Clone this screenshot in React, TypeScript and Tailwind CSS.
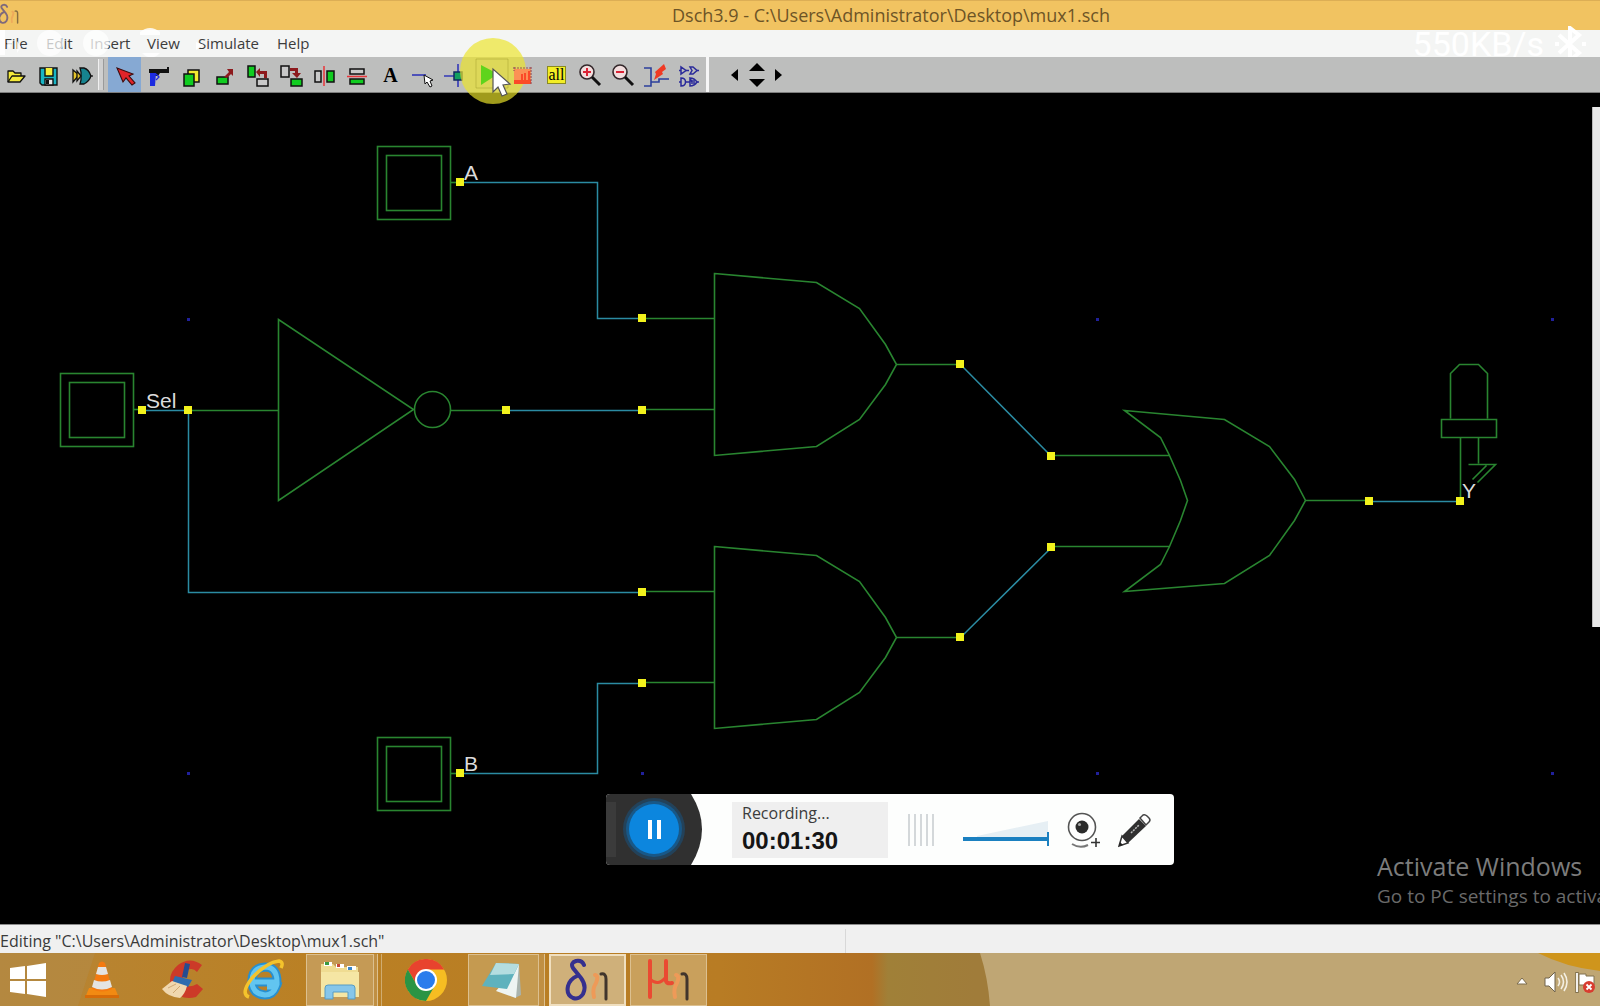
import React from "react";

type Tool = { name: string; art: React.ReactNode };

const K = "#111111";
const G = "#10cc20";

const fileTools: Tool[] = [
  {
    name: "Open",
    art: (
      <g stroke={K} strokeWidth="1.3" strokeLinejoin="round">
        <path d="M8 23V12h5l2 2h6v3" fill="#f4ea3a" />
        <path d="M8 23l4-6h13l-5 6z" fill="#f4ea3a" />
      </g>
    ),
  },
  {
    name: "Save",
    art: (
      <g stroke={K} strokeWidth="1.4">
        <path d="M7 9h17v17H9l-2-2z" fill="#19b5c4" />
        <path d="M12 9h8v8h-8z" fill="#f4ee3c" stroke="none" />
        <path d="M12 9v8h8V9" fill="none" />
        <path d="M12 20h8v6h-8z" fill="#e8e8e8" />
        <path d="M13 21h3v4h-3z" fill={K} stroke="none" />
      </g>
    ),
  },
  {
    name: "Exit",
    art: (
      <g stroke={K} strokeWidth="1.3">
        <path d="M7 11l6 5-6 7z" fill="#e5c52c" />
        <path d="M14 9h4c4 1 6 5 7 8-1 3-3 6-7 8h-4l1-4V13z" fill="#16838f" />
        <path d="M11 12l4 5-4 5z" fill="#e5c52c" />
        <path d="M24 17h3" />
      </g>
    ),
  },
];

const editTools: Tool[] = [
  {
    name: "Select",
    art: <path d="M8 9l16 6-4 2 6 7-3 2-6-7-3 4z" fill="#e0242a" stroke="#3a0c0c" strokeWidth="1.1" />,
  },
  {
    name: "Delete",
    art: (
      <g>
        <path d="M7 10h18V8h2v6h-9l-2 3h-3V14H7z" fill={K} />
        <path d="M8 14h6l-1 13H8z" fill="#1c2be0" />
        <path d="M14 15l3 3-3 3" stroke="#1c2be0" strokeWidth="1.3" fill="none" />
      </g>
    ),
  },
  {
    name: "Copy",
    art: (
      <g stroke={K} strokeWidth="1.5">
        <path d="M13 11h11v12H13z" fill="#f2ec30" />
        <path d="M9 15h10v12H9z" fill={G} />
      </g>
    ),
  },
  {
    name: "Move",
    art: (
      <g>
        <path d="M9 18h11v7H9z" fill={G} stroke={K} strokeWidth="1.5" />
        <path d="M16 18l5-5-2-3h6v7l-2-2-4 4z" fill="#8d1a1d" />
      </g>
    ),
  },
  {
    name: "Rotate left",
    art: (
      <g>
        <path d="M7 7h7v11H7z" fill={G} stroke={K} strokeWidth="1.5" />
        <path d="M16 20h11v7H16z" fill="#c9c9c9" stroke={K} strokeWidth="1.5" />
        <path d="M15 13l4-4v3h7v7h-3v-4h-4v3z" fill="#8d1a1d" />
      </g>
    ),
  },
  {
    name: "Rotate right",
    art: (
      <g>
        <path d="M6 7h8v11H6z" fill="#c9c9c9" stroke={K} strokeWidth="1.5" />
        <path d="M16 20h11v7H16z" fill={G} stroke={K} strokeWidth="1.5" />
        <path d="M15 9h8v5h3l-4 5-5-5h3v-2h-5z" fill="#8d1a1d" />
      </g>
    ),
  },
  {
    name: "Flip horizontal",
    art: (
      <g>
        <path d="M7 12h6v11H7z" fill="#c9c9c9" stroke={K} strokeWidth="1.5" />
        <path d="M19 12h7v11h-7z" fill={G} stroke={K} strokeWidth="1.5" />
        <path d="M16 7v20" stroke="#e8343a" strokeWidth="1.5" />
      </g>
    ),
  },
  {
    name: "Flip vertical",
    art: (
      <g>
        <path d="M9 10h14v5H9z" fill="#c9c9c9" stroke={K} strokeWidth="1.5" />
        <path d="M9 20h14v5H9z" fill={G} stroke={K} strokeWidth="1.5" />
        <path d="M6 17.5h20" stroke="#e8343a" strokeWidth="1.5" />
      </g>
    ),
  },
  { name: "Text", art: null },
  {
    name: "Wire",
    art: (
      <g>
        <path d="M4 16h14" stroke="#3338b8" strokeWidth="1.6" />
        <path d="M16 16l9 5-3 1 2 5-2 1-3-5-2 2z" fill="#fff" stroke={K} />
      </g>
    ),
  },
  {
    name: "Connection",
    art: (
      <g>
        <path d="M3 17h14M17 5v23" stroke="#3338b8" strokeWidth="1.6" />
        <path d="M13 13h8v8h-8z" fill="#12a060" stroke="#102a60" strokeWidth="1.5" />
      </g>
    ),
  },
  { name: "Simulate", art: null },
  {
    name: "Timing",
    art: (
      <g>
        <path d="M7 10h17v15H7z" fill="#fb9155" />
        <path d="M7 21h17v4H7z" fill="#fb4a28" />
        <path d="M15 24V15M18 24V14M22 24V12" stroke="#fb4a28" strokeWidth="2" />
        <path d="M7 9h18M7 8v4M24 8v17" stroke="#9a5058" strokeWidth="1.2" strokeDasharray="2 1" />
      </g>
    ),
  },
  { name: "View all", art: null },
  {
    name: "Zoom in",
    art: (
      <g>
        <circle cx="13" cy="13" r="7" fill="#f2dede" stroke="#33272a" strokeWidth="1.6" />
        <path d="M18 18l8 8" stroke={K} strokeWidth="3" />
        <path d="M9 13h8M13 9v8" stroke="#dc2436" strokeWidth="2" />
      </g>
    ),
  },
  {
    name: "Zoom out",
    art: (
      <g>
        <circle cx="13" cy="13" r="7" fill="#f2dede" stroke="#33272a" strokeWidth="1.6" />
        <path d="M18 18l8 8" stroke={K} strokeWidth="3" />
        <path d="M9 13h8" stroke="#dc2436" strokeWidth="2" />
      </g>
    ),
  },
  {
    name: "Critical path",
    art: (
      <g>
        <path d="M4 9h7v18H4M11 23h8v-3h10" fill="none" stroke="#2b3f9c" strokeWidth="1.6" />
        <path d="M24 5l2 5-4 3 1 2-9 6 2-6-1-2z" fill="#f03a24" />
      </g>
    ),
  },
  {
    name: "Symbol library",
    art: (
      <g fill="none" stroke="#2a2a9a" strokeWidth="1.5">
        <path d="M8 8v7l5-3.500zM17 8h3l4 3.500-4 3.500h-3l2-3.500zM8 19v8c6 0 6-8 0-8zM17 19v8c3 0 5-1 7-4-2-3-4-4-7-4l2 4z" />
        <path d="M6 11.500h2M13 11.500h3M24 11.500h2M6 23h2M12 23h5M19 21v4M21 21v4M24 23h2" />
      </g>
    ),
  },
];

function ToolGroup({ tools, className }: { tools: Tool[]; className: string }) {
  return (
    <div className={`flex ${className}`}>
      {tools.map((t) => (
        <button
          key={t.name}
          aria-label={t.name}
          className={`relative flex min-w-0 flex-1 items-center justify-center ${t.name === "Select" ? "bg-[#86a9d3]" : ""}`}
        >
          {t.name === "Text" ? (
            <span className="font-['Liberation_Serif',serif] text-xl font-bold text-black">A</span>
          ) : t.name === "View all" ? (
            <span className="flex h-[18px] w-[19px] items-center justify-center border border-[#8a8a20] bg-[#f3ee26] font-['Liberation_Serif',serif] text-base leading-none text-black">
              all
            </span>
          ) : t.name === "Simulate" ? (
            <Pointer />
          ) : (
            <svg viewBox="0 0 32 32" className="h-8 w-8 shrink-0" aria-hidden="true">
              {t.art}
            </svg>
          )}
        </button>
      ))}
    </div>
  );
}

function Pointer() {
  return (
    <svg viewBox="0 0 68 68" className="pointer-events-none absolute -top-5 -left-3.5 h-[68px] w-[68px] max-w-none" aria-hidden="true">
      <circle cx="34" cy="34" r="33" fill="#ece52a" fillOpacity="0.68" />
      <path d="M17 22h32v29H17z" fill="none" stroke="#8c8c20" strokeOpacity="0.35" />
      <path d="M22 28l17 9-17 11z" fill="#5fd41c" />
      <path d="M34 32v23l5-5 4 9 5-2-4-9 7-1z" fill="#fff" stroke="#555" strokeWidth="1.2" />
    </svg>
  );
}

const menus = [
  { label: "File", w: "w-[42px]" },
  { label: "Edit", w: "w-[44px]" },
  { label: "Insert", w: "w-[57px]" },
  { label: "View", w: "w-[51px]" },
  { label: "Simulate", w: "w-[79px]" },
  { label: "Help", w: "w-[50px]" },
];

function Input({ x, y }: { x: number; y: number }) {
  return (
    <g>
      <rect x={x} y={y} width="73" height="73" />
      <rect x={x + 9} y={y + 9} width="55" height="55" />
      <path d={`M${x + 73} ${y + 36}h8`} />
    </g>
  );
}

function AndGate({ y }: { y: number }) {
  return (
    <g transform={`translate(715 ${y})`}>
      <path d="M0 0L102 9L145 35L171 71L182 91L171 111L145 146L102 173L0 182Z" />
      <path d="M-73 45H0M-73 136H0M182 91H245" />
    </g>
  );
}

const nodes = [
  [142, 410], [188, 410], [506, 410], [642, 410], [642, 318], [460, 182], [960, 364], [1051, 456],
  [1051, 547], [960, 637], [642, 592], [642, 683], [460, 773], [1369, 501], [1460, 501],
];
const gridDots = [
  [188, 319], [1097, 319], [1552, 319], [188, 773], [642, 773], [1097, 773], [1552, 773],
];

function Schematic() {
  return (
    <svg viewBox="0 93 1600 831" className="block h-[831px] w-[1600px] max-w-none shrink-0" role="img" aria-label="Multiplexer schematic">
      <g fill="#20209a">
        {gridDots.map(([x, y]) => (
          <rect key={`${x}-${y}`} x={x - 1} y={y - 1} width="3" height="3" />
        ))}
      </g>
      <g transform="translate(-0.5 -0.5)" fill="none" strokeWidth="1.6" stroke="#298530">
        <Input x={61} y={374} />
        <Input x={378} y={147} />
        <Input x={378} y={738} />
        <path d="M188 411H279M279 320V501L414 410Z" />
        <circle cx="433" cy="410" r="18" />
        <path d="M451 411H506" />
        <AndGate y={274} />
        <AndGate y={547} />
        <path d="M1125 411L1225 420L1270 447L1295 480L1306 501L1295 521L1270 556L1225 584L1125 592L1161 565L1170 547L1181 521L1188 501L1181 481L1170 456L1161 438Z" />
        <path d="M1051 456H1170M1051 547H1170M1306 501H1369" />
        <path d="M1451 419V374L1460 365H1479L1488 374V419M1442 420H1497V438H1442ZM1461 438V501M1479 438V464M1469 465H1496L1478 483M1487 466L1473 480" />
      </g>
      <g transform="translate(0.5 0.5)" fill="none" strokeWidth="1.5" stroke="#2b8ba2">
        <path d="M142 410H188V592H642M506 410H642M460 182H597V318H642M460 773H597V683H642M960 364L1051 456M960 637L1051 547M1369 501H1460" />
      </g>
      <g fill="#f2f21c">
        {nodes.map(([x, y]) => (
          <rect key={`${x}-${y}`} x={x - 4} y={y - 4} width="8" height="8" />
        ))}
      </g>
      <g fill="#dcdcdc" fontFamily="'Liberation Sans', Arial, sans-serif" fontSize="21">
        <text x="464" y="180">A</text>
        <text x="146" y="408">Sel</text>
        <text x="464" y="771">B</text>
        <text x="1462" y="498">Y</text>
      </g>
    </svg>
  );
}

function Recorder() {
  return (
    <div className="absolute top-[701px] left-[606px] flex h-[71px] w-[568px] items-center overflow-hidden rounded-sm bg-[#fdfefd]">
      <button aria-label="Pause recording" className="h-full w-[96px] shrink-0">
        <svg viewBox="0 0 96 71" className="h-full w-full" aria-hidden="true">
          <path d="M0 0H85Q107 35 85 71H0Z" fill="#303030" />
          <path d="M0 8h10v55H0z" fill="#3b3b3b" />
          <circle cx="48" cy="35" r="31" fill="#23425a" />
          <circle cx="48" cy="35" r="28" fill="#185888" />
          <circle cx="48" cy="35" r="25" fill="#0c86de" />
          <path d="M42 26h4v19h-4zM51 26h4v19h-4z" fill="#fff" />
        </svg>
      </button>
      <div className="ml-[30px] flex h-14 w-[156px] shrink-0 flex-col justify-center bg-[#efefef] pb-0.5 pl-2.5">
        <span className="font-['Open_Sans',sans-serif] text-base leading-6 text-[#3c3c3c]">Recording...</span>
        <span className="font-['Liberation_Sans',sans-serif] text-2xl leading-8 font-bold text-[#151515]">00:01:30</span>
      </div>
      <div className="ml-5 flex w-[26px] shrink-0 justify-between" aria-hidden="true">
        {[0, 1, 2, 3, 4].map((i) => (
          <span key={i} className="h-8 w-0.5 bg-[#d4d8da]" />
        ))}
      </div>
      <div className="relative ml-[29px] flex h-full w-[86px] shrink-0 items-center pt-[18px]">
        <svg viewBox="0 0 86 20" className="absolute top-6 left-0 h-5 w-[86px]" aria-hidden="true">
          <path d="M14 18L85 3V20H14z" fill="#e6eff4" />
        </svg>
        <input
          type="range"
          aria-label="Volume"
          defaultValue={100}
          className="relative h-1 w-full appearance-none bg-[#1b80c0] [&::-webkit-slider-thumb]:h-3.5 [&::-webkit-slider-thumb]:w-0.5 [&::-webkit-slider-thumb]:appearance-none [&::-webkit-slider-thumb]:bg-[#1b80c0]"
        />
      </div>
      <button aria-label="Add webcam" className="ml-4 shrink-0">
        <svg viewBox="0 0 36 40" className="h-10 w-9" aria-hidden="true">
          <circle cx="17" cy="17" r="13.500" fill="#fff" stroke="#555" strokeWidth="1.6" />
          <circle cx="17" cy="17" r="6.500" fill="#2c2c2c" />
          <circle cx="14.500" cy="14.500" r="1.500" fill="#aaa" />
          <path d="M7 34q8 5 16 1" stroke="#777" strokeWidth="2" fill="none" />
          <path d="M31 28v9M26 32.500h9" stroke="#333" strokeWidth="1.600" />
        </svg>
      </button>
      <button aria-label="Draw" className="ml-4 shrink-0">
        <svg viewBox="0 0 36 36" className="h-9 w-9" aria-hidden="true">
          <path d="M2 34l3-10 6 7z" fill="#fff" stroke="#333" strokeWidth="1.500" />
          <path d="M2 34l1-4 3 3z" fill="#222" />
          <path d="M5 24L22 7l7 7L11 31z" fill="#303030" />
          <path d="M14 21l8-8" stroke="#bbb" strokeWidth="1.500" strokeDasharray="2 1" />
          <path d="M23 6l3-3q2-1 4 1l2 2q2 2 0 4l-3 3z" fill="#fff" stroke="#444" strokeWidth="1.500" />
        </svg>
      </button>
    </div>
  );
}

function DschMark({ micro, className }: { micro?: boolean; className: string }) {
  return (
    <svg viewBox="0 0 46 46" className={className} fill="none" strokeLinecap="round" aria-hidden="true">
      {micro ? (
        <g stroke="#ea4a32">
          <path d="M4 4V40" strokeWidth="4" />
          <path d="M4 22q8 8 16-2" strokeWidth="3" />
          <path d="M20 4V24q1 3 6 2" strokeWidth="4" />
        </g>
      ) : (
        <g stroke="#35308e">
          <path d="M19 8q-2-5-8-4-6 2-3 7l8 10q6 8 2 16-4 6-10 4-7-3-5-12 2-7 9-10" strokeWidth="4" />
        </g>
      )}
      <path d="M30 18q4 1 1 8-4 6-2 14" stroke="#ee9a58" strokeWidth="4" />
      <path d="M36 17q5-1 5 5v20" stroke="#41352c" strokeWidth="3" />
    </svg>
  );
}

function TaskButton({ label, className, children }: { label: string; className: string; children: React.ReactNode }) {
  return (
    <button aria-label={label} className={`flex h-[52px] shrink-0 items-center justify-center ${className}`}>
      {children}
    </button>
  );
}

function Taskbar() {
  return (
    <footer className="relative flex h-[53px] shrink-0 items-center overflow-hidden bg-[#b47c25]">
      <svg viewBox="0 0 1600 53" preserveAspectRatio="none" className="absolute inset-0 h-full w-full" aria-hidden="true">
        <defs>
          <linearGradient id="wood">
            <stop offset="0" stopColor="#b78535" />
            <stop offset="0.2" stopColor="#ba8024" />
            <stop offset="0.45" stopColor="#b87c24" />
            <stop offset="0.545" stopColor="#b17024" />
            <stop offset="0.555" stopColor="#a08038" />
            <stop offset="0.61" stopColor="#a07c3a" />
          </linearGradient>
        </defs>
        <path d="M0 0H1600V53H0z" fill="url(#wood)" />
        <path d="M0 0H95L78 53H0z" fill="#b28a48" fillOpacity="0.6" />
        <path d="M980 0H1600V53H990Q988 25 980 0z" fill="#bfa674" />
        <path d="M1538 0H1600V18Q1565 14 1538 0z" fill="#cf951c" />
      </svg>
      <nav className="relative flex items-center" aria-label="Running applications">
        <TaskButton label="Start" className="w-[56px]">
          <svg viewBox="0 0 36 34" className="h-[34px] w-9" fill="#fff" aria-hidden="true">
            <path d="M0 5l15-2v13H0zM17 3l19-3v16H17zM0 18h15v13L0 29zM17 18h19v16l-19-3z" />
          </svg>
        </TaskButton>
        <TaskButton label="VLC media player" className="ml-5 w-[52px]">
          <svg viewBox="0 0 36 38" className="h-[38px] w-9" aria-hidden="true">
            <path d="M5 27h26l4 10H1z" fill="#f28a12" />
            <path d="M1 34h34v3H1z" fill="#d86c08" />
            <path d="M15 2q3-3 6 0l7 26q-10 5-20 0z" fill="#f47a10" />
            <path d="M14 6h8l2 7q-6 2-12 0zM10 19q8 3 16 0l2 7q-10 5-20 0z" fill="#e4e4e2" />
          </svg>
        </TaskButton>
        <TaskButton label="CCleaner" className="ml-7 w-[52px]">
          <svg viewBox="0 0 44 42" className="h-[42px] w-11" aria-hidden="true">
            <path d="M42 6q-12-9-24 0-12 10-6 24 9 12 24 8l7-8-6-5q-9 5-13-1-3-8 3-13 6-3 10 2z" fill="#cc3a28" />
            <path d="M25 4l5 1-3 14-5-1z" fill="#254c90" />
            <path d="M15 17l17 4-4 7-16-4z" fill="#2f6cae" />
            <path d="M12 22l15 5q-2 8-7 12Q8 38 2 30z" fill="#f0d7ae" />
            <path d="M8 29l8-4M13 34l7-7" stroke="#cfa873" />
          </svg>
        </TaskButton>
        <TaskButton label="Internet Explorer" className="ml-7 w-[56px]">
          <svg viewBox="0 0 44 44" className="h-11 w-11" fill="none" aria-hidden="true">
            <path d="M11 24H35Q35 9 23 9 10 10 10 23T23 37q8 0 11-8H25" stroke="#2890d0" strokeWidth="9" />
            <path d="M11 24H35Q35 9 23 9 10 10 10 23T23 37q8 0 11-8H25" stroke="#62c5f0" strokeWidth="5" />
            <path d="M7 39Q-2 36 10 20 25 4 37 3q5 1 2 7" stroke="#f4c32c" strokeWidth="3.500" />
          </svg>
        </TaskButton>
        <TaskButton label="File Explorer" className="ml-3.5 w-[68px] border border-[#dcc090] bg-[#c59a55]">
          <svg viewBox="0 0 42 40" className="h-10 w-[42px]" aria-hidden="true">
            <path d="M2 4h12l3 3h22v30H2z" fill="#efdc92" />
            <path d="M2 12h38v25H2z" fill="#f5e6a4" />
            <path d="M5 2h8v4H5zM17 4h8v4h-8zM28 6h9v4h-9z" fill="#fff" />
            <path d="M6 2h4v3H6z" fill="#3a9a40" />
            <path d="M18 4h3v3h-3z" fill="#c84a38" />
            <path d="M29 7h4v3h-4z" fill="#3a86c8" />
            <path d="M6 39V28q0-3 3-3h24q3 0 3 3v11h-7v-7H14v7z" fill="#86c6ea" stroke="#569cc4" />
          </svg>
        </TaskButton>
        <span className="h-[52px] w-1 border-r border-[#dcc090] bg-[#c08f43]" />
        <span className="h-[52px] w-1 border-r border-[#d0ac70]" />
        <TaskButton label="Google Chrome" className="ml-3.5 w-[60px]">
          <svg viewBox="0 0 42 42" className="h-[42px] w-[42px]" aria-hidden="true">
            <circle cx="21" cy="21" r="21" fill="#f6bd22" />
            <path d="M2.800 10.500A21 21 0 0 1 39.200 10.500H21L12 26z" fill="#e8432e" />
            <path d="M2.800 10.500A21 21 0 0 0 21 42L30 26.200 12 26.200z" fill="#2a9444" />
            <circle cx="21" cy="21" r="11" fill="#fff" />
            <circle cx="21" cy="21" r="9" fill="#2a7cec" />
          </svg>
        </TaskButton>
        <TaskButton label="Notepad" className="ml-3 w-[71px] border border-[#dcc090] bg-[#c59a50] pr-1">
          <svg viewBox="0 0 40 38" className="h-[38px] w-10" aria-hidden="true">
            <path d="M37 3l2 31-6 3-6-3z" fill="#a9b4ae" />
            <path d="M37 3l-3 34-20-7z" fill="#eef4f2" />
            <path d="M14 2l23 1-12 25L0 25z" fill="#5fb2bd" />
            <path d="M14 2l23 1-5 10L8 14z" fill="#b4dde0" />
          </svg>
        </TaskButton>
        <span className="h-[52px] w-1.5 border-r border-[#dcc090] bg-[#c08f43]" />
        <TaskButton label="Dsch" className="ml-1 w-[77px] border-2 border-[#f0dfbf] bg-[#cfb07a]">
          <DschMark className="h-[46px] w-[46px]" />
        </TaskButton>
        <TaskButton label="Microwind" className="ml-1 w-[77px] border border-[#dcc090] bg-[#c9a05c]">
          <DschMark micro className="h-[46px] w-[46px]" />
        </TaskButton>
      </nav>
      <div className="relative mt-1 ml-auto flex items-center">
        <button aria-label="Show hidden icons" className="w-6">
          <svg viewBox="0 0 24 24" className="h-6 w-6" aria-hidden="true">
            <path d="M7 14l5-6 5 6z" fill="#fff" stroke="#7c6c4c" />
          </svg>
        </button>
        <button aria-label="Volume" className="ml-2">
          <svg viewBox="0 0 26 26" className="h-[26px] w-[26px]" fill="none" aria-hidden="true">
            <path d="M3 9h4l6-6v20l-6-6H3z" fill="#fff" stroke="#6f634c" />
            <path d="M16 9q3 4 0 8M19 6q5 7 0 14M22 4q6 9 0 18" stroke="#f4efe2" strokeWidth="1.600" />
          </svg>
        </button>
        <button aria-label="Action Center" className="ml-1.5 pr-1">
          <svg viewBox="0 0 22 24" className="h-6 w-[22px]" aria-hidden="true">
            <path d="M3 2v21" stroke="#80704e" strokeWidth="3.500" />
            <path d="M3 3v19" stroke="#fff" strokeWidth="1.800" />
            <path d="M5 4h7v2h8v9H5z" fill="#fff" stroke="#80704e" />
            <circle cx="15" cy="17" r="6" fill="#d83c30" />
            <path d="M12.500 14.500l5 5M17.500 14.500l-5 5" stroke="#fff" strokeWidth="1.800" />
          </svg>
        </button>
      </div>
    </footer>
  );
}

export default function App() {
  return (
    <div className="flex min-h-screen w-full flex-col overflow-hidden bg-black font-['Open_Sans',sans-serif]">
      <header className="relative flex h-[30px] shrink-0 items-center justify-center border-t border-[#dcae55] bg-[#f1c361] pb-px pl-[182px]">
        <DschMark className="absolute top-0.5 -left-0.5 h-[22px] w-[22px] opacity-60" />
        <h1 className="text-lg whitespace-nowrap text-[#6d5426]">Dsch3.9 - C:\Users\Administrator\Desktop\mux1.sch</h1>
      </header>

      <nav className="relative z-10 flex h-[27px] shrink-0 items-center bg-[#f4f5f4] pb-px pl-1 text-[15px] text-[#3c3c3c]" aria-label="Main menu">
        {menus.map((m) => (
          <button key={m.label} className={`${m.w} shrink-0 text-left whitespace-nowrap`}>
            {m.label}
          </button>
        ))}
        <svg viewBox="0 0 240 34" className="pointer-events-none absolute -top-1 left-0 h-[34px] w-[240px]" fill="#fff" aria-hidden="true">
          <path d="M0 4h5v25H0z" fillOpacity="0.9" />
          <path d="M7 17l6-3-4 9zM17 15l4 6-4 6z" fillOpacity="0.8" />
          <circle cx="50" cy="17" r="13" fillOpacity="0.72" />
          <circle cx="96" cy="17" r="13" fillOpacity="0.75" />
          <path d="M140 6q10-8 20 0v3h-20zM142 27h18q-9 9-18 0zM196 16l8 3-8 5z" fillOpacity="0.85" />
        </svg>
        <div className="pointer-events-none absolute -top-1 right-3 flex h-9 items-center gap-2 text-white" aria-hidden="true">
          <span className="font-['Roboto',sans-serif] text-[34px] leading-9">550KB/s</span>
          <svg viewBox="0 0 36 36" className="h-9 w-9" fill="none" stroke="#fff" strokeWidth="4">
            <path d="M7 9l20 18-9 7V2l9 7L7 27" />
            <path d="M3 18h4M30 18h4" />
          </svg>
        </div>
      </nav>

      <div role="toolbar" aria-label="Tools" className="relative z-10 flex h-9 shrink-0 items-stretch border-b border-[#7d7d7d] bg-[#bdbebd]">
        <ToolGroup tools={fileTools} className="w-[98px] shrink-0" />
        <span className="my-0.5 mr-1 w-1.5 border-r border-l border-r-[#9a9a9a] border-l-[#f0f0f0] bg-[#cfcfcf]" />
        <ToolGroup tools={editTools} className="w-[598px] shrink-0" />
        <span className="w-[3px] bg-[#f6f6f6]" />
        <div className="ml-4 flex items-center">
          <button aria-label="Pan left" className="flex h-8 w-5 items-center justify-center">
            <svg viewBox="0 0 8 12" className="h-3 w-2" aria-hidden="true"><path d="M7 0v12L0 6z" /></svg>
          </button>
          <div className="flex w-6 flex-col items-center gap-2">
            <button aria-label="Pan up">
              <svg viewBox="0 0 16 8" className="h-2 w-4" aria-hidden="true"><path d="M0 8L8 0l8 8z" /></svg>
            </button>
            <button aria-label="Pan down">
              <svg viewBox="0 0 16 8" className="h-2 w-4" aria-hidden="true"><path d="M0 0h16L8 8z" /></svg>
            </button>
          </div>
          <button aria-label="Pan right" className="flex h-8 w-5 items-center justify-center">
            <svg viewBox="0 0 8 12" className="h-3 w-2" aria-hidden="true"><path d="M0 0v12l7-6z" /></svg>
          </button>
        </div>
      </div>

      <main className="relative flex-1 overflow-hidden bg-black">
        <Schematic />
        <Recorder />
        <div className="absolute top-[14px] right-0 h-[520px] w-2 border-l border-[#bbbbbb] bg-[#e9e9e9]" />
        <div className="absolute right-0 bottom-3.5 w-[223px] whitespace-nowrap text-[#7c7c7c]">
          <p className="text-[25px] leading-8">Activate Windows</p>
          <p className="text-[19px] leading-7 text-[#6a6a6a]">Go to PC settings to activa</p>
        </div>
      </main>

      <div role="status" className="flex h-[29px] shrink-0 items-center border-t border-[#8c8c8c] bg-[#f0f0f0] pt-1 text-base text-[#3a3a3a]">
        <span className="w-[846px] shrink-0 border-r border-[#d8d8d8] whitespace-nowrap">Editing "C:\Users\Administrator\Desktop\mux1.sch"</span>
      </div>

      <Taskbar />
    </div>
  );
}
